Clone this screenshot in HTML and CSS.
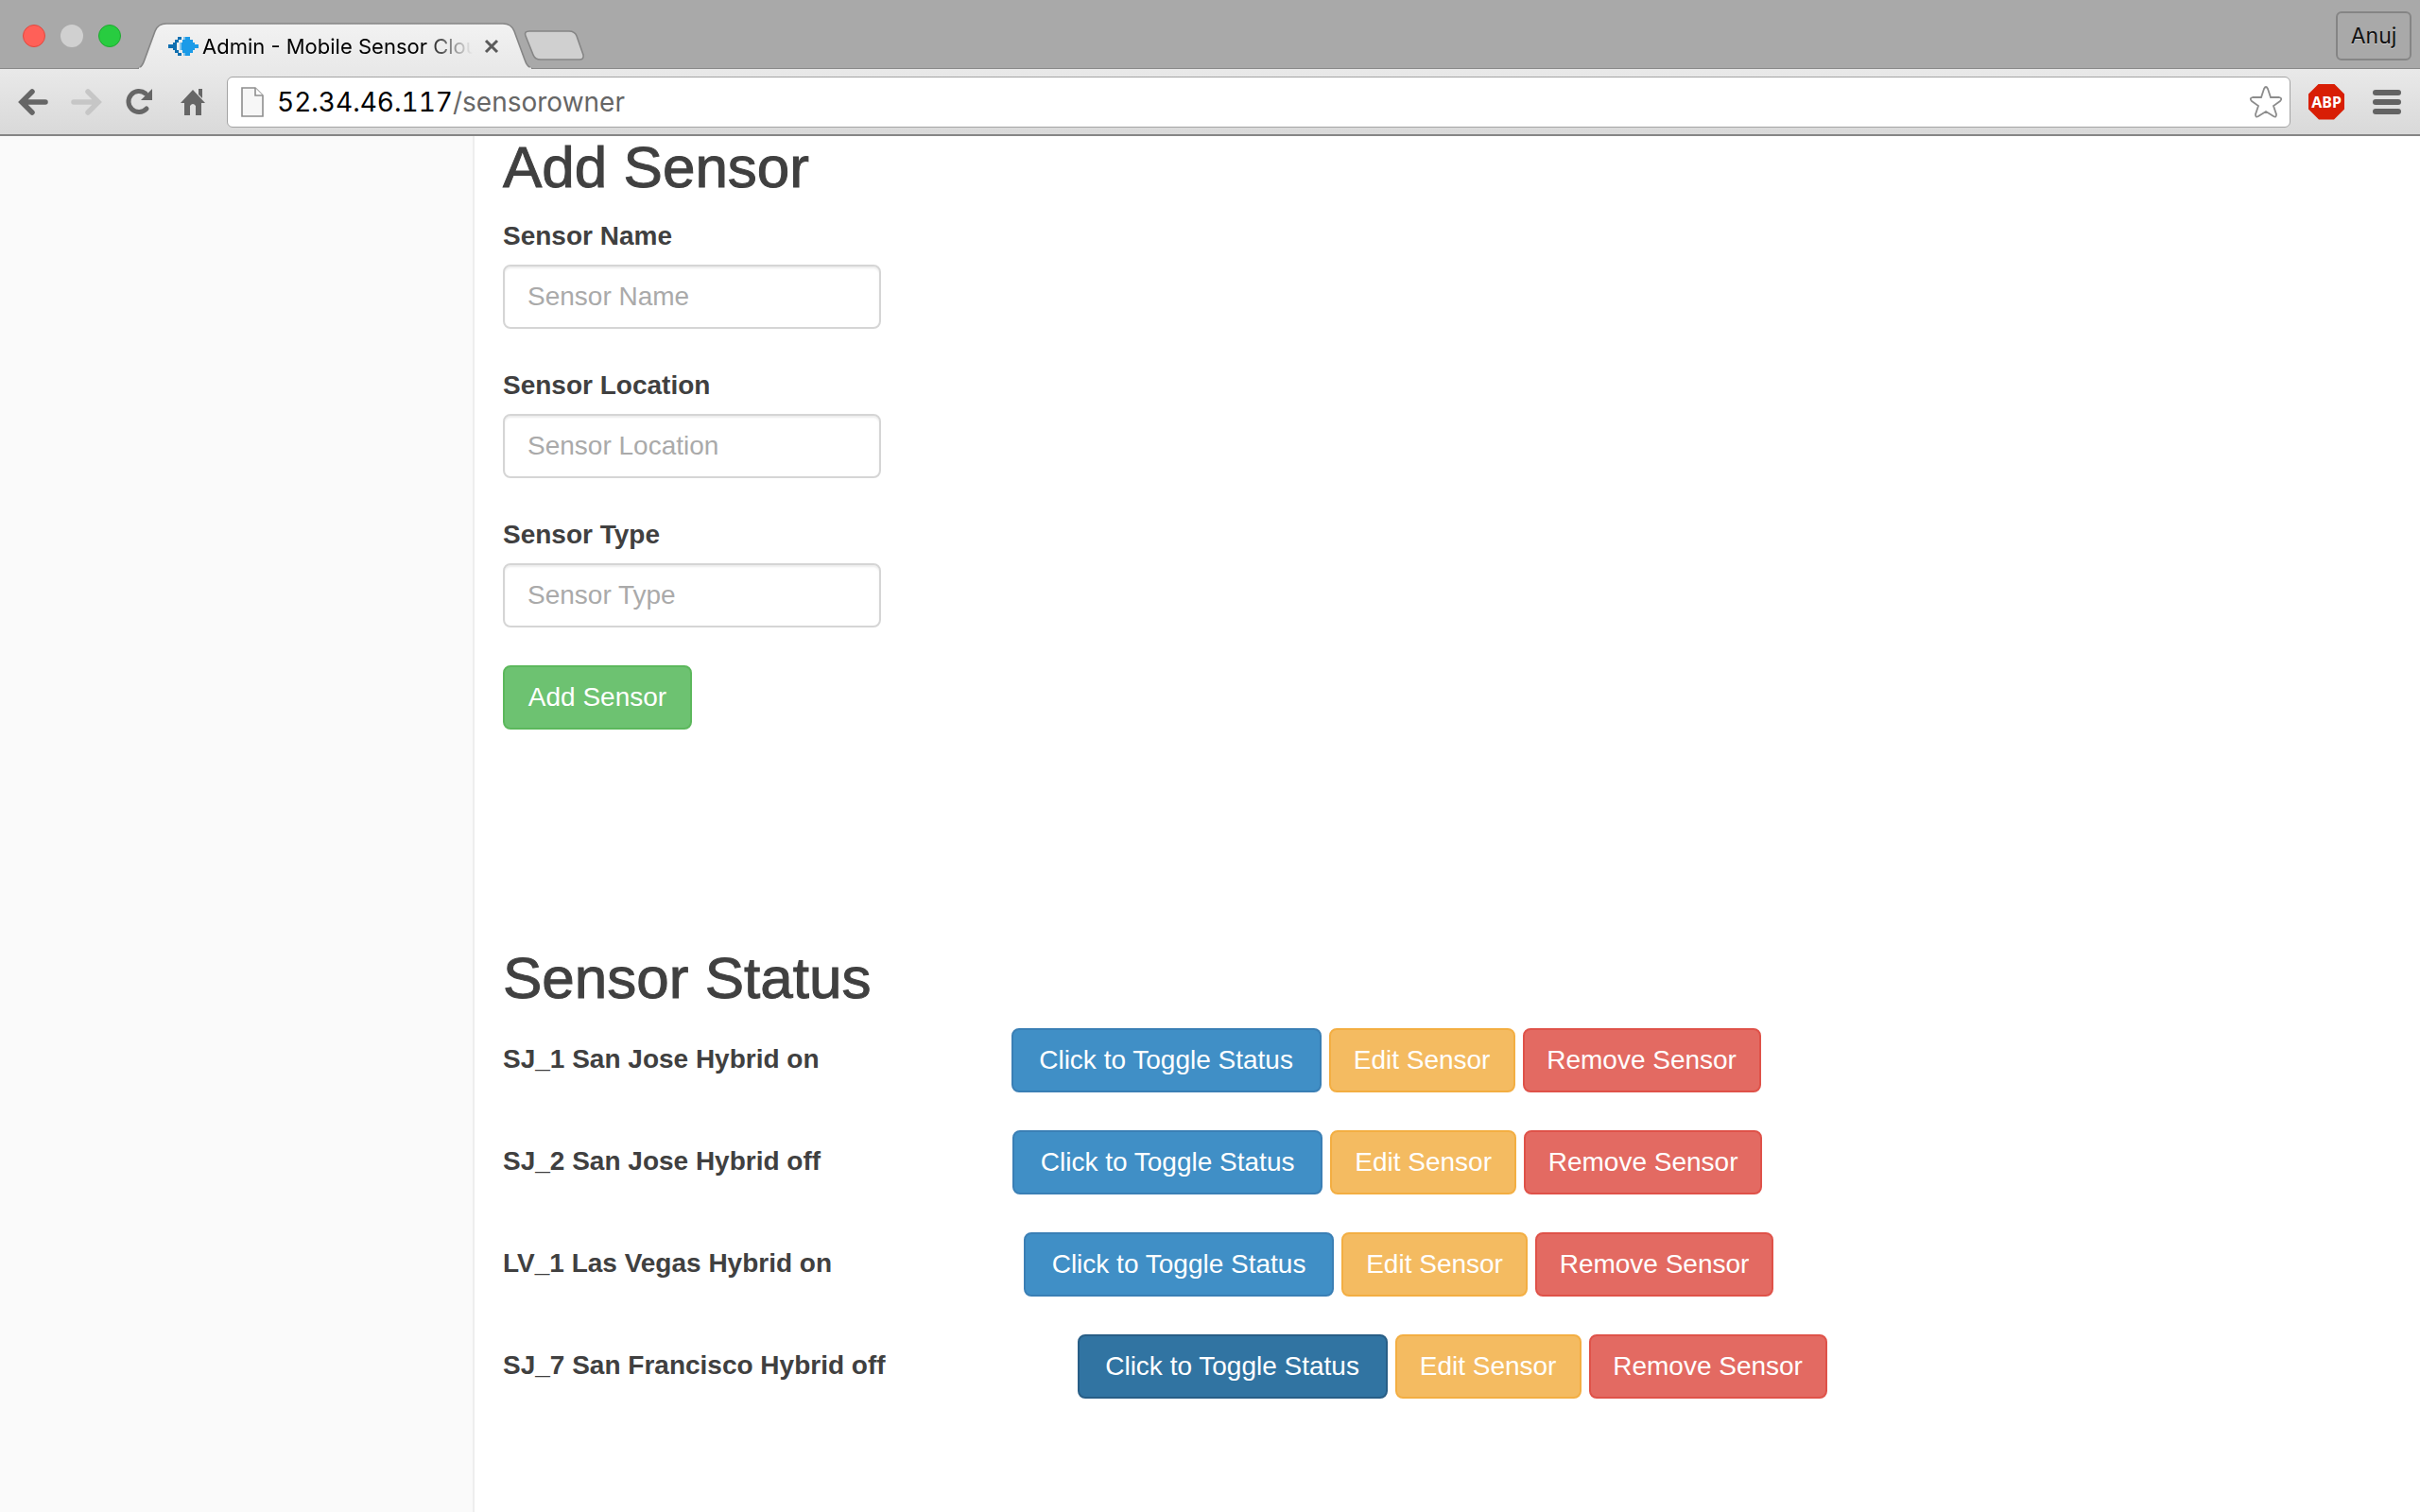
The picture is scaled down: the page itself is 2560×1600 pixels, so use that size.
FILE: index.html
```html
<!DOCTYPE html>
<html lang="en">
<head>
<meta charset="utf-8">
<title>Admin - Mobile Sensor Cloud</title>
<link rel="stylesheet" href="styles.css">
</head>
<body>
<header class="browser">
  <div class="tabstrip">
    <div class="lights">
      <span class="light light-close"></span>
      <span class="light light-min"></span>
      <span class="light light-zoom"></span>
    </div>
    <div class="tab">
      <svg class="tab-shape" viewBox="0 0 420 49" aria-hidden="true">
        <defs><linearGradient id="tabfill" x1="0" y1="0" x2="0" y2="1"><stop offset="0" stop-color="#f2f2f2"/><stop offset="1" stop-color="#e9e9e9"/></linearGradient></defs>
        <path d="M0 49 Q5 48 8 39 L19 9 Q22 1 31 1 L387 1 Q396 1 399 9 L410 39 Q413 48 419 49" fill="url(#tabfill)" stroke="#858585" stroke-width="1.6"/>
        <path d="M2 48.500H417" stroke="#e9e9e9" stroke-width="2"/>
      </svg>
      <div class="tab-content">
        <svg class="favicon" viewBox="0 0 32 26" aria-hidden="true">
          <path d="M10 3h4v3h-3v3H9v8h2v3h3v3h-4v-3H7v-3H5v-2H0v-4h5V9h2V6h3z" fill="#0f6fb0"/>
          <path d="M18 3h5v3h3v3h2v2h4v4h-4v2h-2v3h-3v3h-5v-3h-3v-3h-3V9h3V6h3z" fill="#1b9be8"/>
          <path d="M16 3h2v3h-2zM12 9h2v8h-2zM16 20h2v3h-2z" fill="#83c4ea"/>
        </svg>
        <span class="tab-title">Admin - Mobile Sensor Cloud</span>
        <button class="tab-close" aria-label="Close tab"><svg viewBox="0 0 16 16"><path d="M2 2L14 14M14 2L2 14" stroke="#5a5a5a" stroke-width="3"/></svg></button>
      </div>
    </div>
    <button class="newtab" aria-label="New tab"><svg viewBox="0 0 66 34"><path d="M7 2H49Q55 2 57 7L64 27Q65 32 60 32H19Q13 32 11 27L3 7Q1 2 7 2Z" fill="#d0d0d0" stroke="#858585" stroke-width="1.6"/></svg></button>
    <button class="profile">Anuj</button>
  </div>
  <div class="toolbar">
    <nav class="nav">
      <button class="tool" aria-label="Back"><svg viewBox="0 0 34 30"><path d="M16 4L5 15L16 26M6 15H30" fill="none" stroke="#666" stroke-width="5.500" stroke-linecap="round"/></svg></button>
      <button class="tool" aria-label="Forward"><svg viewBox="0 0 34 30"><path d="M19 4L30 15L19 26M29 15H4" fill="none" stroke="#c6c6c6" stroke-width="5.500" stroke-linecap="round"/></svg></button>
      <button class="tool" aria-label="Reload"><svg viewBox="0 0 34 30"><path d="M24 6A11 11 0 1 0 25 22" fill="none" stroke="#666" stroke-width="5" stroke-linecap="round"/><path d="M31 1V13H19Z" fill="#666"/></svg></button>
      <button class="tool" aria-label="Home"><svg viewBox="0 0 34 30"><path d="M18 2L31 16H27V29H21V19Q18 15 15 19V29H9V16H5Z" fill="#666"/><path d="M24 1H28V11L24 7Z" fill="#666"/></svg></button>
    </nav>
    <div class="omnibox">
      <svg class="page-icon" viewBox="0 0 24 32" aria-hidden="true"><path d="M1 1H15L23 9V31H1Z" fill="#f7f7f7" stroke="#8e8e8e" stroke-width="1.600"/><path d="M15 1V9H23" fill="#fff" stroke="#8e8e8e" stroke-width="1.600"/></svg>
      <span class="url"><span class="host">52.34.46.117</span>/sensorowner</span>
      <button class="star" aria-label="Bookmark"><svg viewBox="0 0 36 36"><path d="M18 2Q19 2 20 4L23 13H32Q36 14 33 17L26 22L29 31Q29 35 26 33L18 28L10 33Q7 35 7 31L10 22L3 17Q0 14 4 13H13L16 4Q17 2 18 2Z" fill="#fff" stroke="#8c8c8c" stroke-width="1.800"/></svg></button>
    </div>
    <button class="abp">ABP</button>
    <button class="menu" aria-label="Menu"><span></span><span></span><span></span></button>
  </div>
</header>
<div class="page">
  <aside class="sidebar"></aside>
  <main class="content">
    <form class="sensor-form">
      <h2>Add Sensor</h2>
      <div class="field"><label for="name">Sensor Name</label><input id="name" type="text" placeholder="Sensor Name"></div>
      <div class="field"><label for="location">Sensor Location</label><input id="location" type="text" placeholder="Sensor Location"></div>
      <div class="field"><label for="type">Sensor Type</label><input id="type" type="text" placeholder="Sensor Type"></div>
      <button class="btn btn-success" type="button">Add Sensor</button>
    </form>
    <section class="status">
      <h2>Sensor Status</h2>
      <div class="sensor"><strong>SJ_1 San Jose Hybrid on</strong><button class="btn btn-primary">Click to Toggle Status</button><button class="btn btn-warning">Edit Sensor</button><button class="btn btn-danger">Remove Sensor</button></div>
      <div class="sensor"><strong>SJ_2 San Jose Hybrid off</strong><button class="btn btn-primary">Click to Toggle Status</button><button class="btn btn-warning">Edit Sensor</button><button class="btn btn-danger">Remove Sensor</button></div>
      <div class="sensor"><strong>LV_1 Las Vegas Hybrid on</strong><button class="btn btn-primary">Click to Toggle Status</button><button class="btn btn-warning">Edit Sensor</button><button class="btn btn-danger">Remove Sensor</button></div>
      <div class="sensor"><strong>SJ_7 San Francisco Hybrid off</strong><button class="btn btn-primary is-active">Click to Toggle Status</button><button class="btn btn-warning">Edit Sensor</button><button class="btn btn-danger">Remove Sensor</button></div>
    </section>
  </main>
</div>
</body>
</html>
```
FILE: styles.css
```css
* { box-sizing: border-box; }
body {
  margin: 0;
  min-height: 100vh;
  display: flex;
  flex-direction: column;
  background: #fff;
  color: #404040;
  font: 28px/40px "Liberation Sans", Arial, sans-serif;
}
button, input { font: inherit; margin: 0; }
button { padding: 0; border: 0; background: none; }
svg { display: block; }

/* Browser window */
.browser { font-family: Inter, "Noto Sans", sans-serif; }
.tabstrip {
  display: flex;
  height: 73px;
  padding: 0 9px 0 24px;
  background: #a9a9a9;
  border-bottom: 1px solid #888;
}
.lights { display: flex; gap: 16px; padding-top: 26px; width: 121px; }
.light { width: 24px; height: 24px; border-radius: 50%; }
.light-close { background: #ff6058; border: 1px solid #e0483e; }
.light-min { background: #d0d0d0; }
.light-zoom { background: #28cc40; border: 1px solid #1fa930; }
.tab { display: grid; width: 420px; margin-top: 24px; height: 49px; z-index: 1; }
.tab > * { grid-area: 1 / 1; min-width: 0; }
.tab-shape { width: 420px; height: 49px; }
.tab-content { display: flex; align-items: center; padding: 0 37px 0 33px; }
.favicon { width: 32px; height: 26px; flex: none; }
.tab-title {
  flex: 1;
  min-width: 0;
  margin-left: 4px;
  overflow: hidden;
  white-space: nowrap;
  color: #000;
  font-size: 22px;
  mask-image: linear-gradient(to right, #000 82%, transparent 100%);
}
.tab-close { flex: none; width: 16px; margin-left: 12px; }
.newtab { width: 66px; height: 34px; margin: 31px 0 0 -12px; }
.profile {
  width: 80px;
  height: 52px;
  margin: 12px 0 0 auto;
  border: 2px solid #858585;
  border-radius: 6px;
  font-size: 23px;
  color: #111;
  text-shadow: 0 1px 0 #d0d0d0;
}
.toolbar {
  display: flex;
  align-items: center;
  height: 71px;
  padding: 0 20px 0 18px;
  background: linear-gradient(#e9e9e9, #d9d9d9);
  border-bottom: 2px solid #858585;
}
.nav { display: flex; gap: 22px; width: 222px; }
.tool { width: 34px; height: 30px; }
.omnibox {
  flex: 1;
  display: flex;
  align-items: center;
  height: 54px;
  padding: 0 7px 0 14px;
  background: #fff;
  border: 1px solid #a3a3a3;
  border-radius: 6px;
}
.page-icon { width: 24px; height: 32px; }
.url { flex: 1; margin-left: 14px; color: #666; font-variant-numeric: tabular-nums; }
.host { color: #000; }
.star { width: 36px; height: 36px; }
.abp {
  width: 38px;
  height: 38px;
  margin-left: 19px;
  background: #d81e05;
  clip-path: polygon(29% 0, 71% 0, 100% 29%, 100% 71%, 71% 100%, 29% 100%, 0 71%, 0 29%);
  color: #fff;
  font-family: "Noto Sans", sans-serif;
  font-size: 16px;
  font-weight: 700;
  line-height: 38px;
}
.menu { display: grid; gap: 4px; width: 30px; margin-left: 30px; }
.menu span { height: 6px; border-radius: 3px; background: #636363; }

/* Page */
.page { flex: 1; display: flex; }
.sidebar { width: 502px; background: #fafafa; border-right: 2px solid #eee; }
.content { flex: 1; padding: 0 30px; }
h2 { margin: 0 0 20px; font-size: 62px; line-height: 66px; font-weight: 400; -webkit-text-stroke: 1px #404040; }
.sensor-form { margin-bottom: 230px; }
.field { display: flex; flex-direction: column; align-items: flex-start; gap: 10px; margin-bottom: 40px; }
label, strong { font-weight: 700; }
input {
  width: 400px;
  height: 68px;
  padding: 12px 24px;
  border: 2px solid #d5d5d5;
  border-radius: 8px;
  box-shadow: inset 0 2px 2px rgba(0, 0, 0, .075);
}
input::placeholder { color: #aaa; opacity: 1; }
.btn { padding: 12px 0; border: 2px solid; border-radius: 8px; color: #fff; line-height: 40px; }
.btn-success { min-width: 200px; background: #6dc271; border-color: #5cb85c; }
.btn-primary { min-width: 328px; margin-left: 195px; background: #408fc6; border-color: #3a7fb5; }
.btn-primary.is-active { background: #3174a2; border-color: #285e86; }
.btn-warning { min-width: 197px; background: #f4bb61; border-color: #f3ae42; }
.btn-danger { min-width: 252px; background: #e36a62; border-color: #df5249; }
.sensor { display: flex; align-items: center; gap: 8px; margin-bottom: 40px; }
.sensor strong { padding-bottom: 2px; }
```
